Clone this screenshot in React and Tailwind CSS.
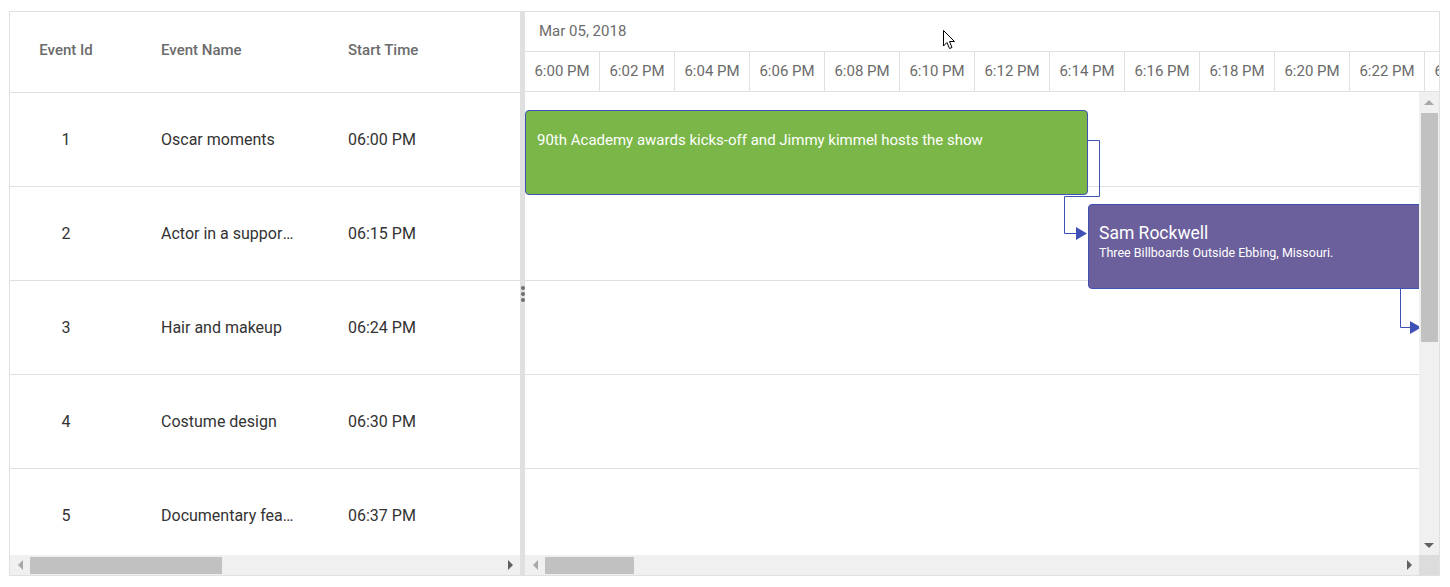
import React from 'react';

const rows = [
  { id: 1, name: 'Oscar moments', start: '06:00 PM' },
  { id: 2, name: 'Actor in a supporting role', start: '06:15 PM' },
  { id: 3, name: 'Hair and makeup', start: '06:24 PM' },
  { id: 4, name: 'Costume design', start: '06:30 PM' },
  { id: 5, name: 'Documentary feature', start: '06:37 PM' },
];

const times = ['6:00 PM', '6:02 PM', '6:04 PM', '6:06 PM', '6:08 PM', '6:10 PM', '6:12 PM', '6:14 PM', '6:16 PM', '6:18 PM', '6:20 PM', '6:22 PM', '6:24 PM'];

function Arrow({ dir, dark }) {
  const fill = dark ? '#606060' : '#a8a8a8';
  const pts = {
    left: '6,1 6,11 1,6',
    right: '1,1 1,11 6,6',
    up: '1,6 11,6 6,1',
    down: '1,1 11,1 6,6',
  }[dir];
  const horiz = dir === 'left' || dir === 'right';
  return (
    <svg className={horiz ? 'h-[12px] w-[7px]' : 'h-[7px] w-[12px]'} viewBox={horiz ? '0 0 7 12' : '0 0 12 7'}>
      <polygon points={pts} fill={fill} />
    </svg>
  );
}

function HScroll({ thumbWidth }) {
  return (
    <div className="flex h-[20px] shrink-0 items-center bg-[#f0f0f0]">
      <div className="flex h-full w-[20px] shrink-0 items-center justify-center">
        <Arrow dir="left" />
      </div>
      <div className="h-[17px] shrink-0 bg-[#c1c1c1]" style={{ width: thumbWidth }} />
      <div className="flex-1" />
      <div className="flex h-full w-[20px] shrink-0 items-center justify-center">
        <Arrow dir="right" dark />
      </div>
    </div>
  );
}

export default function App() {
  return (
    <div
      className="relative h-[587px] w-[1450px] bg-white pl-[9px] pt-[11px]"
      style={{ fontFamily: 'Roboto, "Noto Sans", sans-serif' }}
    >
      <div className="flex h-[565px] w-[1431px] border border-[#e0e0e0]">
        {/* Grid side */}
        <div className="flex w-[510px] shrink-0 flex-col">
          <div className="flex h-[81px] shrink-0 items-center border-b border-[#e0e0e0] pb-[3px] text-[15px] font-medium text-[#6b6b6b]">
            <div className="w-[112px] text-center">Event Id</div>
            <div className="w-[187px] pl-[39px]">Event Name</div>
            <div className="pl-[39px]">Start Time</div>
          </div>
          <div className="flex-1 overflow-hidden">
            {rows.map((r) => (
              <div key={r.id} className="flex h-[94px] items-center border-b border-[#e0e0e0] text-[16px] text-[#333333]">
                <div className="w-[112px] text-center">{r.id}</div>
                <div className="w-[187px] pl-[39px] pr-[14px]">
                  <div className="truncate">{r.name}</div>
                </div>
                <div className="pl-[39px]">{r.start}</div>
              </div>
            ))}
          </div>
          <HScroll thumbWidth={192} />
        </div>

        {/* Splitter */}
        <div className="flex w-[5px] shrink-0 flex-col items-center justify-center gap-[2px] bg-[#e0e0e0]">
          <div className="h-[4px] w-[4px] rounded-full bg-[#6d6d6d]" />
          <div className="h-[4px] w-[4px] rounded-full bg-[#6d6d6d]" />
          <div className="h-[4px] w-[4px] rounded-full bg-[#6d6d6d]" />
        </div>

        {/* Chart side */}
        <div className="flex min-w-0 flex-1 flex-col">
          <div className="shrink-0 text-[15px] text-[#6b6b6b]">
            <div className="flex h-[40px] items-center border-b border-[#e0e0e0] pl-[14px]">Mar 05, 2018</div>
            <div className="flex h-[40px] overflow-hidden border-b border-[#e0e0e0]">
              {times.map((t) => (
                <div key={t} className="flex w-[75px] shrink-0 items-center justify-center border-r border-[#e0e0e0]">
                  {t}
                </div>
              ))}
            </div>
          </div>

          <div className="flex min-h-0 flex-1">
            <div className="relative flex-1 overflow-hidden">
              <div className="h-[95px] border-b border-[#e0e0e0]" />
              {rows.slice(1).map((r) => (
                <div key={r.id} className="h-[94px] border-b border-[#e0e0e0]" />
              ))}

              {/* Oscar moments bar */}
              <div className="absolute left-0 top-[18px] h-[85px] w-[563px] rounded-[4px] border border-[#3f51b5] bg-[#7ab648] px-[11px] pt-[18px] text-[15px] text-white">
                90th Academy awards kicks-off and Jimmy kimmel hosts the show
              </div>

              {/* Actor bar */}
              <div className="absolute left-[563px] top-[112px] h-[85px] w-[340px] rounded-[4px] border border-[#3f51b5] bg-[#6b5f9c] px-[10px] pt-[17px] text-white">
                <div className="text-[17.5px] leading-[22px]">Sam Rockwell</div>
                <div className="text-[12.5px] leading-[18px]">Three Billboards Outside Ebbing, Missouri.</div>
              </div>

              <svg className="pointer-events-none absolute left-0 top-0 h-[463px] w-[894px]">
                <polyline points="562,48.5 574.5,48.5 574.5,104.5 539.5,104.5 539.5,141.5 552,141.5" fill="none" stroke="#3f51b5" strokeWidth="1" />
                <polygon points="551,135 562,141.5 551,148" fill="#3f51b5" />
                <polyline points="875.5,197 875.5,235.5 886,235.5" fill="none" stroke="#3f51b5" strokeWidth="1" />
                <polygon points="885,229 896,235.5 885,242" fill="#3f51b5" />
              </svg>
            </div>

            {/* Vertical scrollbar */}
            <div className="flex w-[20px] shrink-0 flex-col items-center bg-[#f0f0f0]">
              <div className="flex h-[21px] w-full shrink-0 items-center justify-center">
                <Arrow dir="up" />
              </div>
              <div className="h-[229px] w-[17px] shrink-0 bg-[#c1c1c1]" />
              <div className="flex-1" />
              <div className="flex h-[20px] w-full shrink-0 items-center justify-center">
                <Arrow dir="down" dark />
              </div>
            </div>
          </div>

          <div className="flex shrink-0">
            <div className="flex-1">
              <HScroll thumbWidth={89} />
            </div>
            <div className="h-[20px] w-[20px] shrink-0 bg-[#dcdcdc]" />
          </div>
        </div>
      </div>

      {/* Mouse cursor */}
      <svg className="pointer-events-none absolute left-[943px] top-[30px] h-[20px] w-[13px]" viewBox="0 0 13 20">
        <path d="M0.5 0.5 L0.5 16 L4 12.5 L6.5 18.5 L9 17.5 L6.5 11.5 L11.5 11.5 Z" fill="white" stroke="black" strokeWidth="1" strokeLinejoin="round" />
      </svg>
    </div>
  );
}
